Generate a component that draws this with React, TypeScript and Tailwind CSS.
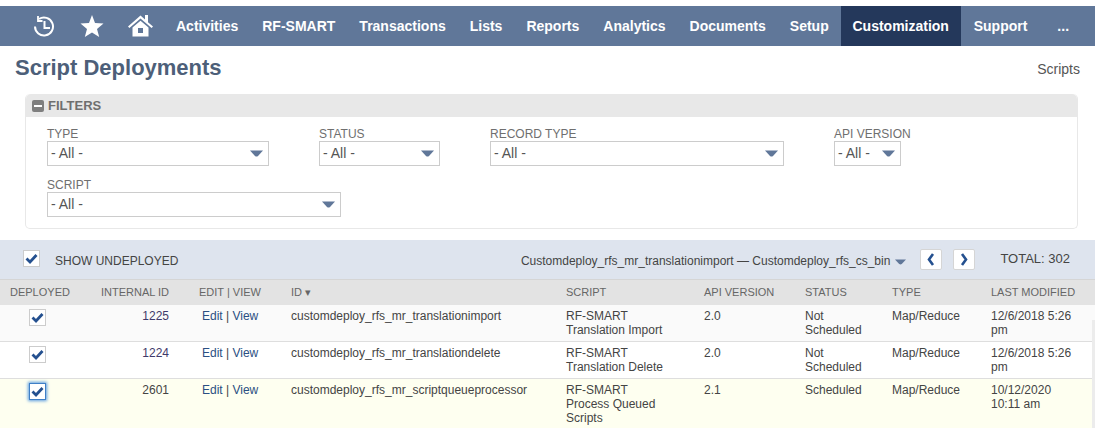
import React from "react";

const navItems = ["Activities", "RF-SMART", "Transactions", "Lists", "Reports", "Analytics", "Documents", "Setup"];

function Caret({ className = "" }: { className?: string }) {
  return (
    <svg width="13" height="7" viewBox="0 0 13 7" className={className}>
      <path d="M0 0.5 H13 L8 6 Q6.5 7 5 6 Z" fill="#607799" />
    </svg>
  );
}

function Check({ focus = false }: { focus?: boolean }) {
  return (
    <span
      className={`flex h-[17px] w-[17px] items-center justify-center bg-white border ${
        focus ? "border-[#3f7fc6] shadow-[0_0_3px_1px_#5b9ce0]" : "border-[#cccccc]"
      }`}
    >
      <svg width="13" height="11" viewBox="0 0 13 11">
        <path d="M1.5 5.5 L5 9 L11.5 2" fill="none" stroke="#24508f" strokeWidth="2.8" />
      </svg>
    </span>
  );
}

function Field({ label, width, className = "" }: { label: string; width: string; className?: string }) {
  return (
    <div className={className}>
      <div className="text-[12px] leading-[14px] text-[#6f6f6f]">{label}</div>
      <div className={`flex h-[25px] items-center justify-between border border-[#cccccc] pl-[3px] pr-[5px] text-[14px] text-[#555555] ${width}`}>
        <span>- All -</span>
        <Caret />
      </div>
    </div>
  );
}

const cols = "grid grid-cols-[90px_89px_112px_275px_138px_101px_87px_99px_104px]";

const rows = [
  { dep: false, iid: "1225", idv: "customdeploy_rfs_mr_translationimport", script: "RF-SMART Translation Import", api: "2.0", status: "Not Scheduled", mod: "12/6/2018 5:26 pm", bg: "bg-[#fafafa]", h: "h-[37px] border-b", iidc: "text-[#3f3a6b]" },
  { dep: false, iid: "1224", idv: "customdeploy_rfs_mr_translationdelete", script: "RF-SMART Translation Delete", api: "2.0", status: "Not Scheduled", mod: "12/6/2018 5:26 pm", bg: "bg-white", h: "h-[37px] border-b", iidc: "text-[#3f3a6b]" },
  { dep: true, iid: "2601", idv: "customdeploy_rfs_mr_scriptqueueprocessor", script: "RF-SMART Process Queued Scripts", api: "2.1", status: "Scheduled", mod: "10/12/2020 10:11 am", bg: "bg-[#fefff0]", h: "h-[50px]", iidc: "text-[#444444]" },
];

export default function App() {
  return (
    <div className="h-[428px] w-[1095px] overflow-hidden bg-white font-['Liberation_Sans',Arial,sans-serif]">
      <div className="h-[6px]" />
      <nav className="flex h-[40px] items-center bg-[#607799] text-[14px] font-bold text-white">
        <div className="flex items-center pl-[33px]">
          <svg width="22" height="22" viewBox="0 0 22 22" fill="none" stroke="white" strokeWidth="2">
            <path d="M2 11.5 A 9 9 0 1 0 6 4" />
            <path d="M5 1 V6 H9.5" strokeWidth="1.8" />
            <path d="M11.5 2 V2.5" strokeWidth="2" />
            <path d="M11.5 6 V13 H17" />
          </svg>
          <svg width="24" height="24" viewBox="0 0 24 24" className="ml-[25px]">
            <path d="M12 1 L15 9 L23.5 9.5 L17 15 L19.2 23 L12 18.5 L4.8 23 L7 15 L0.5 9.5 L9 9 Z" fill="white" />
          </svg>
          <svg width="25" height="23" viewBox="0 0 25 23" className="ml-[24px] -mt-[1px]" fill="white">
            <path d="M12.5 1.5 L17 5.5 V1 H20 V8.2 L25 12.5 L23.6 14 L12.5 4.4 L1.4 14 L0 12.5 Z" />
            <path fillRule="evenodd" d="M4.5 13.5 L12.5 6.8 L20.5 13.5 V22.5 H4.5 Z M10 14 V19 H15 V14 Z" />
          </svg>
        </div>
        <div className="ml-[23px] flex items-center gap-[24px]">
          {navItems.map((n) => (
            <span key={n}>{n}</span>
          ))}
        </div>
        <span className="ml-[12px] flex h-full w-[120px] items-center justify-center bg-[#24385b]">Customization</span>
        <span className="ml-[13px]">Support</span>
        <span className="ml-[30px]">...</span>
      </nav>

      <div className="flex h-[42px] items-start justify-between pl-[15px] pr-[15px]">
        <h1 className="mt-[7px] text-[22px] font-bold leading-[30px] text-[#4d5f79]">Script Deployments</h1>
        <span className="mt-[15px] text-[14px] leading-[16px] text-[#555555]">Scripts</span>
      </div>

      <section className="ml-[25px] mr-[17px] mt-[6px] h-[135px] rounded-[5px] border border-[#e8e8e8] border-t-0">
        <div className="flex h-[23px] items-center rounded-t-[5px] bg-[#e8e8e8] pl-[6px] text-[13px] font-bold text-[#6f6f6f]">
          <span className="relative mr-[4px] block h-[12px] w-[12px] rounded-[2px] bg-[#7f7f7f]">
            <span className="absolute left-[2px] top-[5px] h-[2px] w-[8px] bg-white" />
          </span>
          FILTERS
        </div>
        <div className="pl-[21px]">
          <div className="mt-[10px] flex">
            <Field label="TYPE" width="w-[222px]" />
            <Field label="STATUS" width="w-[121px]" className="ml-[50px]" />
            <Field label="RECORD TYPE" width="w-[294px]" className="ml-[50px]" />
            <Field label="API VERSION" width="w-[67px]" className="ml-[50px]" />
          </div>
          <Field label="SCRIPT" width="w-[294px]" className="mt-[12px]" />
        </div>
      </section>

      <div className="mt-[11px] flex h-[40px] items-center justify-between border-b border-[#d5d5d5] bg-[#dee4ee] pr-[25px] text-[#444444]">
        <div className="flex items-center">
          <span className="ml-[23px] -mt-[3px]">
            <Check />
          </span>
          <span className="ml-[15px] mt-[3px] text-[12px]">SHOW UNDEPLOYED</span>
        </div>
        <div className="flex items-center">
          <span className="mt-[3px] text-[12px]">Customdeploy_rfs_mr_translationimport — Customdeploy_rfs_cs_bin</span>
          <Caret className="ml-[5px] mt-[5px] h-[6px] w-[11px]" />
          {["M8 2 L4 7.5 L8 13", "M4 2 L8 7.5 L4 13"].map((d, i) => (
            <span key={d} className={`${i === 0 ? "ml-[14px]" : "ml-[11px]"} -mt-[1px] flex h-[21px] w-[22px] items-center justify-center rounded-[2px] border border-[#d5d5d5] bg-white`}>
              <svg width="12" height="15" viewBox="0 0 12 15">
                <path d={d} fill="none" stroke="#24508f" strokeWidth="2.6" />
              </svg>
            </span>
          ))}
          <span className="ml-[25px] -mt-[1px] text-[13px]">TOTAL: 302</span>
        </div>
      </div>

      <div className={`${cols} h-[25px] items-center bg-[#e3e3e3] text-[11px] text-[#666666]`}>
        <span className="pl-[10px]">DEPLOYED</span>
        <span className="pr-[10px] text-right">INTERNAL ID</span>
        <span className="pl-[20px]">EDIT | VIEW</span>
        <span>ID ▾</span>
        <span>SCRIPT</span>
        <span>API VERSION</span>
        <span>STATUS</span>
        <span>TYPE</span>
        <span>LAST MODIFIED</span>
      </div>

      <div className="relative">
        {rows.map((r) => (
          <div key={r.iid} className={`${cols} ${r.h} border-[#dedede] pt-[4px] ${r.bg} text-[12px] leading-[14px] text-[#444444]`}>
            <span className="ml-[29px]">
              <Check focus={r.dep} />
            </span>
            <span className={`pr-[10px] text-right ${r.iidc}`}>{r.iid}</span>
            <span className="pl-[23px] text-[#2b4f82]">
              Edit <span className="text-[#444444]">|</span> View
            </span>
            <span>{r.idv}</span>
            <span className="pr-[38px]">{r.script}</span>
            <span>{r.api}</span>
            <span className="pr-[15px]">{r.status}</span>
            <span>Map/Reduce</span>
            <span className="pr-[14px]">{r.mod}</span>
          </div>
        ))}
        <div className="absolute right-0 top-[15px] h-[110px] w-[3px] bg-[#ececec]" />
      </div>
    </div>
  );
}
